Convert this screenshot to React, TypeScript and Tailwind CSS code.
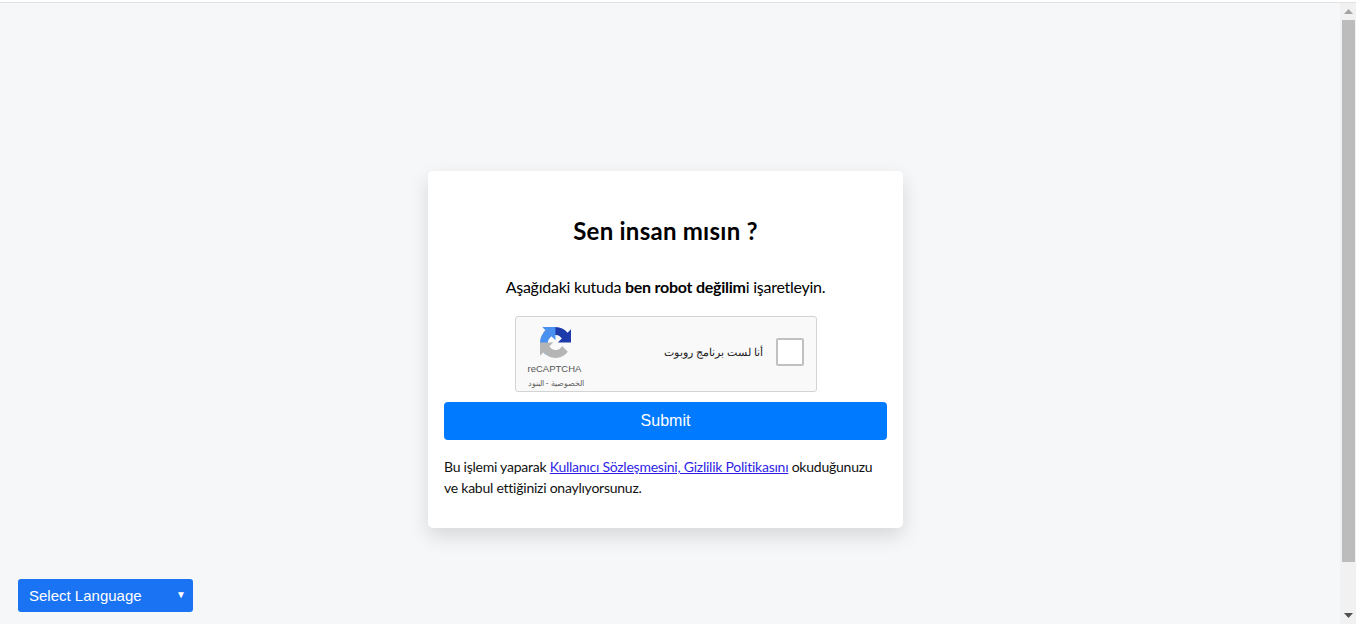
export default function App() {
  return (
    <div className="relative flex h-[624px] w-[1356px] flex-col overflow-hidden bg-[#f5f7f9] font-['Liberation_Sans',sans-serif]">
      <div className="h-[3px] w-full border-b border-[#e2e2e2] bg-white" />
      <div className="flex min-h-0 flex-1">
        <main className="flex-1 pl-[428px] pt-[168px]">
          <div className="h-[357px] w-[475px] rounded-[5px] bg-white px-4 pt-[42px] font-['Lato','Noto_Sans',sans-serif] text-black shadow-[0_8px_20px_rgba(0,0,0,0.13)]">
            <h1 className="text-center text-[24px] font-bold leading-[36px] tracking-[0.25px]">Sen insan mısın ?</h1>
            <p className="mt-[26px] text-center text-[16px] leading-[24px] tracking-[-0.25px]">
              Aşağıdaki kutuda <b>ben robot değilim</b>i işaretleyin.
            </p>
            <div className="mx-auto mt-[17px] flex h-[76px] w-[302px] justify-between rounded-[3px] border border-[#d3d3d3] bg-[#f9f9f9] font-['Liberation_Sans',sans-serif]">
              <div className="flex w-[90px] flex-col items-start pl-[12px] pt-[10px] text-[#555]">
                <svg viewBox="0 0 64 64" className="ml-[12px] h-[31px] w-[31px]">
                  <path d="M64 31.955l-.033-1.37V4.687l-7.16 7.16C50.948 4.674 42.033.093 32.05.093c-10.4 0-19.622 4.96-25.458 12.64l11.736 11.86a15.55 15.55 0 0 1 4.754-5.334c2.05-1.6 4.952-2.906 8.968-2.906.485 0 .86.057 1.135.163 4.976.393 9.288 3.14 11.828 7.124l-8.307 8.307 32.3.001" fill="#1c3aa9" />
                  <path d="M31.862.094l-1.37.033H4.594l7.16 7.16C4.58 13.147 0 22.06 0 32.046c0 10.4 4.96 19.622 12.64 25.458l11.86-11.736a15.55 15.55 0 0 1-5.334-4.754c-1.6-2.05-2.906-4.952-2.906-8.968 0-.485.057-.86.163-1.135.393-4.976 3.14-9.288 7.124-11.828l8.307 8.307L31.862.094" fill="#4a90f0" />
                  <path d="M.001 32.045l.033 1.37v25.898l7.16-7.16c5.86 7.173 14.774 11.754 24.76 11.754 10.4 0 19.622-4.96 25.458-12.64l-11.736-11.86a15.55 15.55 0 0 1-4.754 5.334c-2.05 1.6-4.952 2.906-8.968 2.906-.485 0-.86-.057-1.135-.163-4.976-.393-9.288-3.14-11.828-7.124l8.307-8.307-32.3-.001" fill="#b5b5b5" />
                </svg>
                <div className="mt-[5px] text-[9.5px] leading-[12px]">reCAPTCHA</div>
                <div dir="rtl" className="mt-[2px] whitespace-nowrap text-[8.4px] leading-[12px] text-[#666]">الخصوصية - البنود</div>
              </div>
              <div className="flex items-center pb-[4px] pr-[12px]">
                <span dir="rtl" className="mr-[12px] text-[11.3px] text-[#222]">أنا لست برنامج روبوت</span>
                <div className="h-[28px] w-[28px] rounded-[2px] border-2 border-[#c1c1c1] bg-white" />
              </div>
            </div>
            <button className="mt-[10px] block h-[38px] w-full rounded-[4px] bg-[#007bff] font-['Liberation_Sans',sans-serif] text-[16px] text-white">
              Submit
            </button>
            <p className="mt-[16px] text-[14px] leading-[21px] tracking-[-0.24px] text-[#111]">
              Bu işlemi yaparak{" "}
              <a className="text-[#2f1fe6] underline" href="#">Kullanıcı Sözleşmesini, Gizlilik Politikasını</a>{" "}
              okuduğunuzu ve kabul ettiğinizi onaylıyorsunuz.
            </p>
          </div>
        </main>
        <div className="flex w-[16px] flex-col bg-[#f1f1f1]">
          <div className="flex h-[17px] items-center justify-center">
            <svg width="9" height="5" viewBox="0 0 9 5"><path d="M4.5 0 9 5H0z" fill="#a3a3a3" /></svg>
          </div>
          <div className="ml-[2px] h-[542px] w-[13px] bg-[#bcbcbc]" />
          <div className="flex flex-1 items-end justify-center pb-[6px]">
            <svg width="9" height="5" viewBox="0 0 9 5"><path d="M0 0h9L4.5 5z" fill="#505050" /></svg>
          </div>
        </div>
      </div>
      <div className="absolute left-[18px] top-[579px] flex h-[33px] w-[175px] items-center justify-between rounded-[3px] bg-[#1a73f3] pl-[11px] pr-[7px] pt-[1px] text-[15px] text-white">
        <span>Select Language</span>
        <span className="mb-[4px] text-[10px]">▼</span>
      </div>
    </div>
  );
}
